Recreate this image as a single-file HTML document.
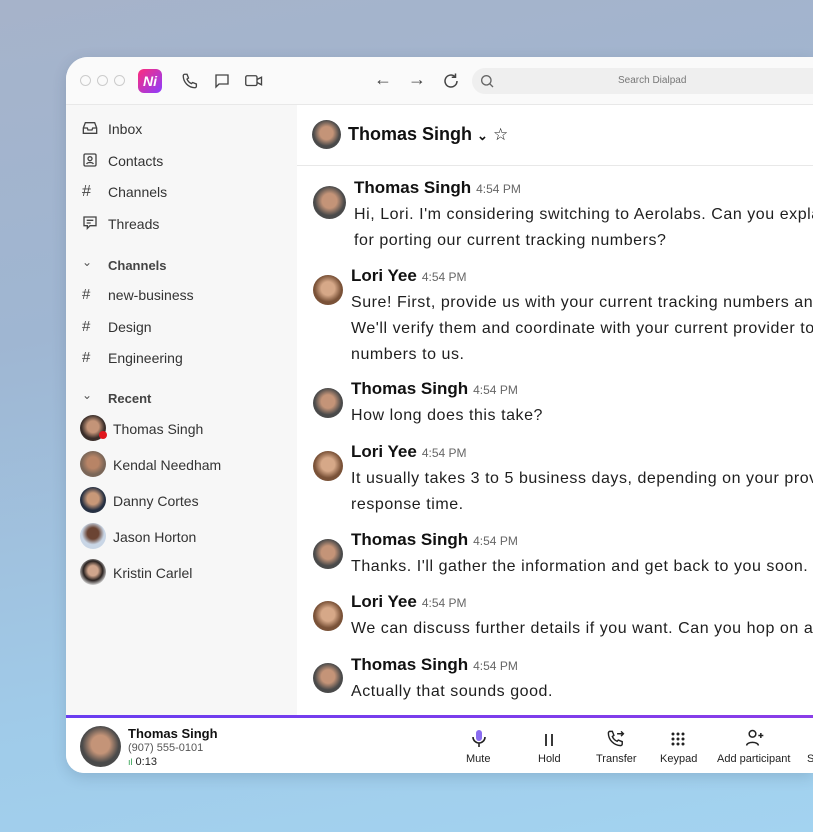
<!DOCTYPE html>
<html><head><meta charset="utf-8"><style>
*{margin:0;padding:0;box-sizing:border-box}
html,body{overflow:hidden}
body{width:813px;height:832px;position:relative;font-family:"Liberation Sans",sans-serif;background:linear-gradient(170deg,#a6b3ca 0%,#9fb6d2 35%,#a0cbe9 75%,#a3d3f0 100%)}
.win{position:absolute;left:66px;top:57px;width:747px;height:716px;background:#fff;border-radius:22px 0 0 18px;overflow:hidden;box-shadow:0 4px 14px rgba(40,60,90,.18)}
.top{position:absolute;left:0;top:0;right:0;height:48px;background:#fafafa;border-bottom:1px solid #e8e8e8}
.side{position:absolute;left:0;top:48px;width:231px;height:613px;background:#f7f7f7}
.a{position:absolute}
.nav{position:absolute;left:42px;font-size:14px;color:#333}
.ic{position:absolute;left:16px}
.sec{position:absolute;left:42px;font-size:13px;font-weight:bold;color:#444}
.av{position:absolute;border-radius:50%;overflow:hidden}
.m{position:absolute;left:285px;font-size:16px;color:#1e1e1e;line-height:26px;white-space:nowrap;letter-spacing:0.55px}
.n{font-weight:bold;font-size:17px;color:#111;letter-spacing:0}
.t{font-size:12px;color:#666;font-weight:normal;letter-spacing:0}
.btn{position:absolute;top:696px;font-size:11px;color:#222;text-align:center;white-space:nowrap}
</style></head><body>
<div class="win">
 <div class="top">
  <div class="a" style="left:14px;top:18px;width:11px;height:11px;border:1px solid #ccc;border-radius:50%"></div>
  <div class="a" style="left:31px;top:18px;width:11px;height:11px;border:1px solid #ccc;border-radius:50%"></div>
  <div class="a" style="left:48px;top:18px;width:11px;height:11px;border:1px solid #ccc;border-radius:50%"></div>
  <div class="a" style="left:72px;top:12px;width:24px;height:24px;border-radius:6px;background:linear-gradient(135deg,#ff2d7a,#8b3cff);color:#fff;font-weight:bold;font-size:14px;text-align:center;line-height:24px;font-style:italic">Ni</div>
  <svg class="a" style="left:115px;top:15px" width="18" height="18" viewBox="0 0 24 24" fill="none" stroke="#444" stroke-width="1.8"><path d="M5 3h3l2 5-2 1.5a11 11 0 0 0 6 6L15.5 14l5 2v3a2 2 0 0 1-2 2A16 16 0 0 1 3 5a2 2 0 0 1 2-2z"/></svg>
  <svg class="a" style="left:147px;top:15px" width="18" height="18" viewBox="0 0 24 24" fill="none" stroke="#444" stroke-width="1.8"><path d="M4 4h16v12H8l-4 4z"/></svg>
  <svg class="a" style="left:178px;top:15px" width="20" height="18" viewBox="0 0 26 24" fill="none" stroke="#444" stroke-width="1.8"><rect x="2" y="5" width="15" height="13" rx="2"/><path d="M17 10l6-3v10l-6-3"/></svg>
  <div class="a" style="left:308px;top:12px;font-size:18px;color:#444">←</div>
  <div class="a" style="left:342px;top:12px;font-size:18px;color:#444">→</div>
  <svg class="a" style="left:376px;top:15px" width="18" height="18" viewBox="0 0 24 24" fill="none" stroke="#444" stroke-width="2"><path d="M20 12a8 8 0 1 1-3-6.2M18 2v5h-5"/></svg>
  <div class="a" style="left:406px;top:11px;width:420px;height:26px;border-radius:13px;background:#efefef"></div>
  <svg class="a" style="left:413px;top:16px" width="16" height="16" viewBox="0 0 24 24" fill="none" stroke="#666" stroke-width="2"><circle cx="11" cy="11" r="7"/><path d="M16 16l5 5"/></svg>
  <div class="a" style="left:552px;top:18px;font-size:10px;color:#777">Search Dialpad</div>
 </div>
 <div class="side">
  <svg class="ic" style="top:16px" width="16" height="14" viewBox="0 0 24 20" fill="none" stroke="#444" stroke-width="2"><path d="M2 10l3-8h14l3 8v8H2zM2 10h6l1 3h6l1-3h6"/></svg><div class="nav" style="top:16px">Inbox</div>
  <svg class="ic" style="top:47px" width="16" height="16" viewBox="0 0 24 24" fill="none" stroke="#444" stroke-width="2"><rect x="3" y="3" width="18" height="18" rx="2"/><circle cx="12" cy="10" r="3"/><path d="M7 18c1-3 9-3 10 0"/></svg><div class="nav" style="top:48px">Contacts</div>
  <div class="ic" style="top:78px;font-size:16px;color:#444">#</div><div class="nav" style="top:79px">Channels</div>
  <svg class="ic" style="top:110px" width="16" height="16" viewBox="0 0 24 24" fill="none" stroke="#444" stroke-width="2"><path d="M3 3h18v13H12l-4 4v-4H3zM7 8h10M7 12h6"/></svg><div class="nav" style="top:111px">Threads</div>
  <div class="ic" style="top:150px;font-size:12px;color:#555">⌄</div><div class="sec" style="top:153px">Channels</div>
  <div class="ic" style="top:181px;font-size:15px;color:#444">#</div><div class="nav" style="top:182px">new-business</div>
  <div class="ic" style="top:213px;font-size:15px;color:#444">#</div><div class="nav" style="top:214px">Design</div>
  <div class="ic" style="top:244px;font-size:15px;color:#444">#</div><div class="nav" style="top:245px">Engineering</div>
  <div class="ic" style="top:283px;font-size:12px;color:#555">⌄</div><div class="sec" style="top:286px">Recent</div>
  <div class="av" style="left:14px;top:310px;width:26px;height:26px;background:radial-gradient(circle at 50% 45%,#c49478 30%,#3a2e2a 60%)"></div>
  <div class="a" style="left:33px;top:326px;width:8px;height:8px;border-radius:50%;background:#e0161d"></div>
  <div class="nav" style="left:47px;top:316px">Thomas Singh</div>
  <div class="av" style="left:14px;top:346px;width:26px;height:26px;background:radial-gradient(circle at 50% 45%,#b88466 30%,#7a6658 60%)"></div><div class="nav" style="left:47px;top:352px">Kendal Needham</div>
  <div class="av" style="left:14px;top:382px;width:26px;height:26px;background:radial-gradient(circle at 50% 45%,#c89878 30%,#263042 60%)"></div><div class="nav" style="left:47px;top:388px">Danny Cortes</div>
  <div class="av" style="left:14px;top:418px;width:26px;height:26px;background:radial-gradient(circle at 50% 40%,#6b4433 28%,#c9d6e6 55%)"></div><div class="nav" style="left:47px;top:424px">Jason Horton</div>
  <div class="av" style="left:14px;top:454px;width:26px;height:26px;background:radial-gradient(circle at 50% 45%,#d0a58c 26%,#2a2220 50%,#ddd 75%)"></div><div class="nav" style="left:47px;top:460px">Kristin Carlel</div>
 </div>
 <div class="a" style="left:231px;top:108px;right:0;height:1px;background:#e8e8e8"></div>
 <div class="av" style="left:246px;top:63px;width:29px;height:29px;background:radial-gradient(circle at 50% 45%,#c49478 30%,#4a4a4a 60%)"></div>
 <div class="a" style="left:282px;top:67px;font-size:18px;font-weight:bold;color:#111">Thomas Singh <span style="font-size:13px">⌄</span> <span style="font-weight:normal;font-size:17px">☆</span></div>

 <div class="av" style="left:247px;top:129px;width:33px;height:33px;background:radial-gradient(circle at 50% 45%,#c49478 30%,#4a4a4a 60%)"></div>
 <div class="m" style="left:288px;top:118px"><span class="n">Thomas Singh</span> <span class="t">4:54 PM</span><br>Hi, Lori. I'm considering switching to Aerolabs. Can you explain the process<br>for porting our current tracking numbers?</div>
 <div class="av" style="left:247px;top:218px;width:30px;height:30px;background:radial-gradient(circle at 50% 45%,#d6a888 30%,#7a5238 60%)"></div>
 <div class="m" style="top:206px"><span class="n">Lori Yee</span> <span class="t">4:54 PM</span><br>Sure! First, provide us with your current tracking numbers and account details.<br>We'll verify them and coordinate with your current provider to transfer the<br>numbers to us.</div>
 <div class="av" style="left:247px;top:331px;width:30px;height:30px;background:radial-gradient(circle at 50% 45%,#c49478 30%,#4a4a4a 60%)"></div>
 <div class="m" style="top:319px"><span class="n">Thomas Singh</span> <span class="t">4:54 PM</span><br>How long does this take?</div>
 <div class="av" style="left:247px;top:394px;width:30px;height:30px;background:radial-gradient(circle at 50% 45%,#d6a888 30%,#7a5238 60%)"></div>
 <div class="m" style="top:382px"><span class="n">Lori Yee</span> <span class="t">4:54 PM</span><br>It usually takes 3 to 5 business days, depending on your provider's<br>response time.</div>
 <div class="av" style="left:247px;top:482px;width:30px;height:30px;background:radial-gradient(circle at 50% 45%,#c49478 30%,#4a4a4a 60%)"></div>
 <div class="m" style="top:470px"><span class="n">Thomas Singh</span> <span class="t">4:54 PM</span><br>Thanks. I'll gather the information and get back to you soon.</div>
 <div class="av" style="left:247px;top:544px;width:30px;height:30px;background:radial-gradient(circle at 50% 45%,#d6a888 30%,#7a5238 60%)"></div>
 <div class="m" style="top:532px"><span class="n">Lori Yee</span> <span class="t">4:54 PM</span><br>We can discuss further details if you want. Can you hop on a call?</div>
 <div class="av" style="left:247px;top:606px;width:30px;height:30px;background:radial-gradient(circle at 50% 45%,#c49478 30%,#4a4a4a 60%)"></div>
 <div class="m" style="top:595px"><span class="n">Thomas Singh</span> <span class="t">4:54 PM</span><br>Actually that sounds good.</div>

 <div class="a" style="left:0;top:658px;right:0;height:3px;background:linear-gradient(90deg,#6a3df0,#8a3de8)"></div>
 <div class="a" style="left:0;top:661px;right:0;height:55px;background:#fff"></div>
 <div class="av" style="left:14px;top:669px;width:41px;height:41px;background:radial-gradient(circle at 50% 45%,#c49478 30%,#4a4a4a 60%)"></div>
 <div class="a" style="left:62px;top:669px;font-size:13px;font-weight:bold;color:#111">Thomas Singh</div>
 <div class="a" style="left:62px;top:685px;font-size:11px;color:#555">(907) 555-0101</div>
 <div class="a" style="left:62px;top:699px;font-size:11px;color:#222"><span style="color:#2a9d4a;font-size:9px">ıl</span> 0:13</div>
 <svg class="a" style="left:405px;top:672px" width="16" height="20" viewBox="0 0 16 20"><rect x="5" y="1" width="6" height="11" rx="3" fill="#8a6cf0"/><path d="M2 8a6 6 0 0 0 12 0M8 14v4" fill="none" stroke="#222" stroke-width="1.6"/></svg>
 <div class="btn" style="left:400px">Mute</div>
 <svg class="a" style="left:477px;top:676px" width="12" height="14" viewBox="0 0 12 14"><path d="M3 1v12M9 1v12" stroke="#222" stroke-width="1.8"/></svg>
 <div class="btn" style="left:472px">Hold</div>
 <svg class="a" style="left:540px;top:672px" width="19" height="19" viewBox="0 0 24 24" fill="none" stroke="#222" stroke-width="1.8"><path d="M5 3h3l2 5-2 1.5a11 11 0 0 0 6 6L15.5 14l5 2v3a2 2 0 0 1-2 2A16 16 0 0 1 3 5a2 2 0 0 1 2-2zM14 6h8M19 3l3 3-3 3"/></svg>
 <div class="btn" style="left:530px">Transfer</div>
 <svg class="a" style="left:605px;top:675px" width="14" height="14" viewBox="0 0 14 14" fill="#222"><circle cx="2" cy="2" r="1.5"/><circle cx="7" cy="2" r="1.5"/><circle cx="12" cy="2" r="1.5"/><circle cx="2" cy="7" r="1.5"/><circle cx="7" cy="7" r="1.5"/><circle cx="12" cy="7" r="1.5"/><circle cx="2" cy="12" r="1.5"/><circle cx="7" cy="12" r="1.5"/><circle cx="12" cy="12" r="1.5"/></svg>
 <div class="btn" style="left:594px">Keypad</div>
 <svg class="a" style="left:679px;top:671px" width="20" height="20" viewBox="0 0 24 24" fill="none" stroke="#222" stroke-width="1.8"><circle cx="9" cy="7" r="4"/><path d="M2 21c0-5 14-5 14 0M19 6v6M16 9h6"/></svg>
 <div class="btn" style="left:651px">Add participant</div>
 <div class="btn" style="left:741px">S</div>
</div>
</body></html>
